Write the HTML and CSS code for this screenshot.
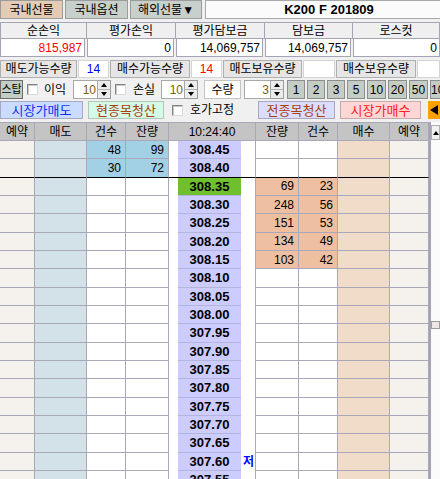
FILE: index.html
```html
<!DOCTYPE html>
<html lang="ko">
<head>
<meta charset="utf-8">
<link rel="stylesheet" href="styles.css">
</head>
<body>
<div class="tabs">
  <div class="tab tab-on">국내선물</div>
  <div class="tab">국내옵션</div>
  <div class="tab tab-wide">해외선물▼</div>
  <div class="title">K200 F 201809</div>
</div>

<div class="summary">
  <div class="sh">순손익</div>
  <div class="sh">평가손익</div>
  <div class="sh">평가담보금</div>
  <div class="sh">담보금</div>
  <div class="sh">로스컷</div>
  <div class="sv red">815,987</div>
  <div class="sv">0</div>
  <div class="sv">14,069,757</div>
  <div class="sv">14,069,757</div>
  <div class="sv">0</div>
</div>

<div class="qty">
  <div class="ql w77">매도가능수량</div>
  <div class="qv w31 blue">14</div>
  <div class="ql w80">매수가능수량</div>
  <div class="qv w31 red">14</div>
  <div class="ql w79">매도보유수량</div>
  <div class="qv w32"></div>
  <div class="ql w80">매수보유수량</div>
  <div class="qv grow"></div>
</div>

<div class="opts">
  <div class="stop">스탑</div>
  <span class="chk ml4"></span>
  <span class="lbl ml6">이익</span>
  <div class="num ml8 w25">10</div><div class="spin"><i class="up"></i><i class="dn"></i></div>
  <span class="chk ml4"></span>
  <span class="lbl ml7">손실</span>
  <div class="num ml7 w24">10</div><div class="spin"><i class="up"></i><i class="dn"></i></div>
  <div class="qbox">수량</div>
  <div class="num ml3 w27">3</div><div class="spin"><i class="up"></i><i class="dn"></i></div>
  <div class="nb ml3 w18">1</div>
  <div class="nb w18">2</div>
  <div class="nb w18">3</div>
  <div class="nb w18">5</div>
  <div class="nb w19">10</div>
  <div class="nb w19">20</div>
  <div class="nb w19">50</div>
  <div class="nb w22">100</div>
</div>

<div class="acts">
  <div class="act mkt-sell">시장가매도</div>
  <div class="act clr-one">현종목청산</div>
  <span class="chk ml8"></span>
  <span class="fix">호가고정</span>
  <div class="act clr-all">전종목청산</div>
  <div class="act mkt-buy">시장가매수</div>
  <div class="arrow"><i></i></div>
</div>

<div class="book">
  <div class="grid">
    <div class="r hd">
      <div class="c">예약</div><div class="c">매도</div><div class="c">건수</div><div class="c">잔량</div><div class="c">10:24:40</div><div class="c">잔량</div><div class="c">건수</div><div class="c">매수</div><div class="c">예약</div>
    </div>
    <div class="r">
      <div class="c rv"></div><div class="c sell"></div><div class="c ask">48</div><div class="c ask">99</div><div class="c px"><span class="ps"></span><b class="pv">308.45</b><span class="pe"></span></div><div class="c"></div><div class="c"></div><div class="c buy"></div><div class="c rv"></div>
    </div>
    <div class="r sep">
      <div class="c rv"></div><div class="c sell"></div><div class="c ask">30</div><div class="c ask">72</div><div class="c px"><span class="ps"></span><b class="pv">308.40</b><span class="pe"></span></div><div class="c"></div><div class="c"></div><div class="c buy"></div><div class="c rv"></div>
    </div>
    <div class="r">
      <div class="c rv"></div><div class="c sell"></div><div class="c"></div><div class="c"></div><div class="c px"><span class="ps"></span><b class="pv cur">308.35</b><span class="pe"></span></div><div class="c bid">69</div><div class="c bid">23</div><div class="c buy"></div><div class="c rv"></div>
    </div>
    <div class="r">
      <div class="c rv"></div><div class="c sell"></div><div class="c"></div><div class="c"></div><div class="c px"><span class="ps"></span><b class="pv">308.30</b><span class="pe"></span></div><div class="c bid">248</div><div class="c bid">56</div><div class="c buy"></div><div class="c rv"></div>
    </div>
    <div class="r">
      <div class="c rv"></div><div class="c sell"></div><div class="c"></div><div class="c"></div><div class="c px"><span class="ps"></span><b class="pv">308.25</b><span class="pe"></span></div><div class="c bid">151</div><div class="c bid">53</div><div class="c buy"></div><div class="c rv"></div>
    </div>
    <div class="r">
      <div class="c rv"></div><div class="c sell"></div><div class="c"></div><div class="c"></div><div class="c px"><span class="ps"></span><b class="pv">308.20</b><span class="pe"></span></div><div class="c bid">134</div><div class="c bid">49</div><div class="c buy"></div><div class="c rv"></div>
    </div>
    <div class="r">
      <div class="c rv"></div><div class="c sell"></div><div class="c"></div><div class="c"></div><div class="c px"><span class="ps"></span><b class="pv">308.15</b><span class="pe"></span></div><div class="c bid">103</div><div class="c bid">42</div><div class="c buy"></div><div class="c rv"></div>
    </div>
    <div class="r">
      <div class="c rv"></div><div class="c sell"></div><div class="c"></div><div class="c"></div><div class="c px"><span class="ps"></span><b class="pv">308.10</b><span class="pe"></span></div><div class="c"></div><div class="c"></div><div class="c buy"></div><div class="c rv"></div>
    </div>
    <div class="r">
      <div class="c rv"></div><div class="c sell"></div><div class="c"></div><div class="c"></div><div class="c px"><span class="ps"></span><b class="pv">308.05</b><span class="pe"></span></div><div class="c"></div><div class="c"></div><div class="c buy"></div><div class="c rv"></div>
    </div>
    <div class="r">
      <div class="c rv"></div><div class="c sell"></div><div class="c"></div><div class="c"></div><div class="c px"><span class="ps"></span><b class="pv">308.00</b><span class="pe"></span></div><div class="c"></div><div class="c"></div><div class="c buy"></div><div class="c rv"></div>
    </div>
    <div class="r">
      <div class="c rv"></div><div class="c sell"></div><div class="c"></div><div class="c"></div><div class="c px"><span class="ps"></span><b class="pv">307.95</b><span class="pe"></span></div><div class="c"></div><div class="c"></div><div class="c buy"></div><div class="c rv"></div>
    </div>
    <div class="r">
      <div class="c rv"></div><div class="c sell"></div><div class="c"></div><div class="c"></div><div class="c px"><span class="ps"></span><b class="pv">307.90</b><span class="pe"></span></div><div class="c"></div><div class="c"></div><div class="c buy"></div><div class="c rv"></div>
    </div>
    <div class="r">
      <div class="c rv"></div><div class="c sell"></div><div class="c"></div><div class="c"></div><div class="c px"><span class="ps"></span><b class="pv">307.85</b><span class="pe"></span></div><div class="c"></div><div class="c"></div><div class="c buy"></div><div class="c rv"></div>
    </div>
    <div class="r">
      <div class="c rv"></div><div class="c sell"></div><div class="c"></div><div class="c"></div><div class="c px"><span class="ps"></span><b class="pv">307.80</b><span class="pe"></span></div><div class="c"></div><div class="c"></div><div class="c buy"></div><div class="c rv"></div>
    </div>
    <div class="r">
      <div class="c rv"></div><div class="c sell"></div><div class="c"></div><div class="c"></div><div class="c px"><span class="ps"></span><b class="pv">307.75</b><span class="pe"></span></div><div class="c"></div><div class="c"></div><div class="c buy"></div><div class="c rv"></div>
    </div>
    <div class="r">
      <div class="c rv"></div><div class="c sell"></div><div class="c"></div><div class="c"></div><div class="c px"><span class="ps"></span><b class="pv">307.70</b><span class="pe"></span></div><div class="c"></div><div class="c"></div><div class="c buy"></div><div class="c rv"></div>
    </div>
    <div class="r">
      <div class="c rv"></div><div class="c sell"></div><div class="c"></div><div class="c"></div><div class="c px"><span class="ps"></span><b class="pv">307.65</b><span class="pe"></span></div><div class="c"></div><div class="c"></div><div class="c buy"></div><div class="c rv"></div>
    </div>
    <div class="r">
      <div class="c rv"></div><div class="c sell"></div><div class="c"></div><div class="c"></div><div class="c px"><span class="ps"></span><b class="pv">307.60</b><span class="pe low">저</span></div><div class="c"></div><div class="c"></div><div class="c buy"></div><div class="c rv"></div>
    </div>
    <div class="r">
      <div class="c rv"></div><div class="c sell"></div><div class="c"></div><div class="c"></div><div class="c px"><span class="ps"></span><b class="pv">307.55</b><span class="pe"></span></div><div class="c"></div><div class="c"></div><div class="c buy"></div><div class="c rv"></div>
    </div>
  </div>
  <div class="sb">
    <div class="sb-up"><i></i></div>
    <div class="sb-thumb"></div>
  </div>
</div>
</body>
</html>
```

FILE: styles.css
```css
html, body {
  margin: 0;
  padding: 0;
}
body {
  width: 440px;
  height: 479px;
  overflow: hidden;
  background: #f0f0f0;
  font-family: "Liberation Sans", "Noto Sans CJK KR", sans-serif;
  font-size: 12px;
  color: #000;
}
* { box-sizing: border-box; }

/* tabs */
.tabs {
  display: flex;
  height: 19px;
  gap: 2px;
}
.tab {
  width: 63px;
  border: 1px solid #9c9c9c;
  background: #c8d0cc;
  display: flex;
  align-items: center;
  justify-content: center;
  font-size: 12px;
  line-height: 1;
}
.tab-on { background: #e4cbb6; width: 63px; }
.tab-wide { width: 72px; }
.title {
  flex: 1;
  margin-left: 1px;
  border: 1px solid #a8a8a8;
  border-right: none;
  background: #fbfbfb;
  display: flex;
  align-items: center;
  justify-content: center;
  font-weight: bold;
  font-size: 13px;
  padding-left: 12px;
}

/* summary */
.summary {
  margin-top: 3px;
  display: grid;
  grid-template-columns: 87px 89px 89px 88px 87px;
  grid-template-rows: 17px 18px;
}
.sh {
  border: 1px solid #a4a4b4;
  border-left: none;
  background: #efefef;
  display: flex;
  align-items: center;
  justify-content: center;
  line-height: 1;
}
.sh:first-child { border-left: 1px solid #a4a4b4; }
.sv {
  margin-right: 2px;
  border: 1px solid #a4a4b4;
  border-top: none;
  background: #fff;
  display: flex;
  align-items: center;
  justify-content: flex-end;
  padding-right: 2px;
  line-height: 1;
}
.sv:last-child { margin-right: 0; }
.red { color: #ff0000; }
.blue { color: #0000ff; }

/* quantity row */
.qty {
  margin-top: 3px;
  height: 18px;
  display: flex;
  gap: 1px;
}
.ql {
  border: 1px solid #b0b0b0;
  background: #e6e6e6;
  display: flex;
  align-items: center;
  justify-content: center;
  line-height: 1;
  white-space: nowrap;
}
.qv {
  border: 1px solid #d4d4d4;
  background: #fff;
  display: flex;
  align-items: center;
  justify-content: center;
  line-height: 1;
}
.w77 { width: 77px; }
.w31 { width: 31px; }
.w80 { width: 80px; }
.w79 { width: 79px; }
.w32 { width: 32px; }
.grow { flex: 1; }

/* options row */
.opts {
  margin-top: 2px;
  height: 19px;
  display: flex;
  align-items: center;
}
.opts > * { flex: none; }
.stop {
  width: 23px;
  height: 19px;
  border: 1px solid #6c6c6c;
  background: #c4ccc6;
  font-size: 11px;
  display: flex;
  align-items: center;
  justify-content: center;
  line-height: 1;
  overflow: hidden;
  white-space: nowrap;
}
.chk {
  width: 11px;
  height: 11px;
  background: #fff;
  border: 1px solid;
  border-color: #848484 #dcdcdc #dcdcdc #848484;
  box-shadow: inset 1px 1px 0 #c8c8c8;
  flex: none;
}
.lbl { line-height: 1; white-space: nowrap; width: 21px; }
.ml3 { margin-left: 3px; }
.ml4 { margin-left: 4px; }
.ml6 { margin-left: 6px; }
.ml7 { margin-left: 7px; }
.ml8 { margin-left: 8px; }
.num {
  height: 19px;
  border: 1px solid #a8a8a8;
  background: #fff;
  color: #7c6000;
  display: flex;
  align-items: center;
  justify-content: flex-end;
  padding-right: 1px;
  line-height: 1;
}
.w24 { width: 24px; }
.w25 { width: 25px; }
.w27 { width: 27px; }
.spin {
  width: 13px;
  height: 19px;
  display: flex;
  flex-direction: column;
  border: 1px solid #9c9c9c;
  border-left: none;
  background: #ececec;
}
.spin i {
  flex: 1;
  display: flex;
  align-items: center;
  justify-content: center;
}
.spin i.up { border-bottom: 1px solid #b4b4b4; }
.spin i.up::before {
  content: "";
  border-left: 3px solid transparent;
  border-right: 3px solid transparent;
  border-bottom: 4px solid #000;
}
.spin i.dn::before {
  content: "";
  border-left: 3px solid transparent;
  border-right: 3px solid transparent;
  border-top: 4px solid #000;
}
.qbox {
  margin-left: 6px;
  width: 37px;
  height: 19px;
  border: 1px solid #c4c4c4;
  background: #fff;
  display: flex;
  align-items: center;
  justify-content: center;
  line-height: 1;
  white-space: nowrap;
}
.nb {
  height: 19px;
  margin-right: 2px;
  border: 1px solid #8c8c8c;
  background: #c4ccc6;
  display: flex;
  align-items: center;
  justify-content: center;
  line-height: 1;
  flex: none;
  overflow: hidden;
}
.w18 { width: 18px; }
.w19 { width: 19px; }
.w22 { width: 22px; }

/* action row */
.acts {
  margin-top: 2px;
  height: 18px;
  display: flex;
  align-items: center;
}
.act {
  height: 18px;
  border: 1px solid #a8a8c0;
  display: flex;
  align-items: center;
  justify-content: center;
  line-height: 1;
  font-size: 13px;
  flex: none;
  white-space: nowrap;
}
.mkt-sell { width: 83px; background: #cadcff; color: #1030f0; }
.clr-one { width: 76px; margin-left: 5px; background: #d6fae8; color: #a84010; border-color: #b0c8b8; }
.fix { margin-left: 7px; width: 50px; line-height: 1; white-space: nowrap; flex: none; }
.clr-all { width: 77px; margin-left: 18px; background: #dcdcff; color: #a84010; }
.mkt-buy { width: 81px; margin-left: 5px; background: #ffd6d6; color: #ff2020; border-color: #c8a8a8; }
.arrow {
  margin-left: 7px;
  flex: 1;
  height: 18px;
  background: #ffa200;
  display: flex;
  align-items: center;
  padding-left: 2px;
}
.arrow i {
  border-top: 5px solid transparent;
  border-bottom: 5px solid transparent;
  border-right: 8px solid #000;
}

/* order book */
.book {
  margin-top: 3px;
  display: flex;
  height: 357px;
  overflow: hidden;
}
.grid {
  width: 429px;
  flex: none;
}
.r {
  display: grid;
  grid-template-columns: 35px 52px 39px 43px 87px 43px 39px 52px 39px;
  height: 18.33px;
}
.c {
  border-right: 1px solid #a8a8b8;
  border-bottom: 1px solid #a8a8b8;
  background: #fff;
  display: flex;
  align-items: center;
  justify-content: flex-end;
  padding-right: 4px;
  line-height: 1;
  overflow: hidden;
}
.r.hd { height: 19px; }
.hd .c {
  background: #c4c4c4;
  justify-content: center;
  padding: 0;
  border-top: 1px solid #a8a8b8;
}
.rv { background: #f5f2ee; }
.sell { background: #d2e2e8; }
.ask { background: #a2d0e4; }
.bid { background: #efbfa1; }
.buy { background: #f0dcc8; }
.c.px {
  padding: 0;
  border-bottom: none;
  align-items: stretch;
  justify-content: flex-start;
}
.ps { width: 9px; flex: none; background: #fff; }
.pv {
  width: 63px;
  flex: none;
  background: #ccccff;
  border-bottom: 1px solid #b4b4dc;
  display: flex;
  align-items: center;
  justify-content: center;
  font-size: 13px;
  font-weight: bold;
  line-height: 1;
}
.pv.cur { background: #6fbf2f; }
.pe {
  flex: 1;
  background: #fff;
  display: flex;
  align-items: center;
  padding-left: 2px;
}
.pe.low {
  color: #0000ff;
  font-weight: bold;
  font-size: 12px;
}
.r.sep .c { border-bottom: 1px solid #000; }
.r.sep .pv { border-bottom: none; }

.sb {
  flex: 1;
  border-left: 2px solid #a4a4b4;
  background: #fbfbfb;
  padding-top: 3px;
}
.sb-up {
  height: 15px;
  border: 1px solid #b0b0b0;
  background: #f0f0f0;
  display: flex;
  align-items: center;
  justify-content: center;
}
.sb-up i {
  border-left: 3px solid transparent;
  border-right: 3px solid transparent;
  border-bottom: 4px solid #000;
}
.sb-thumb {
  margin-top: 181px;
  height: 8px;
  border: 1px solid #9c9c9c;
  background: #ece6e6;
}
```
